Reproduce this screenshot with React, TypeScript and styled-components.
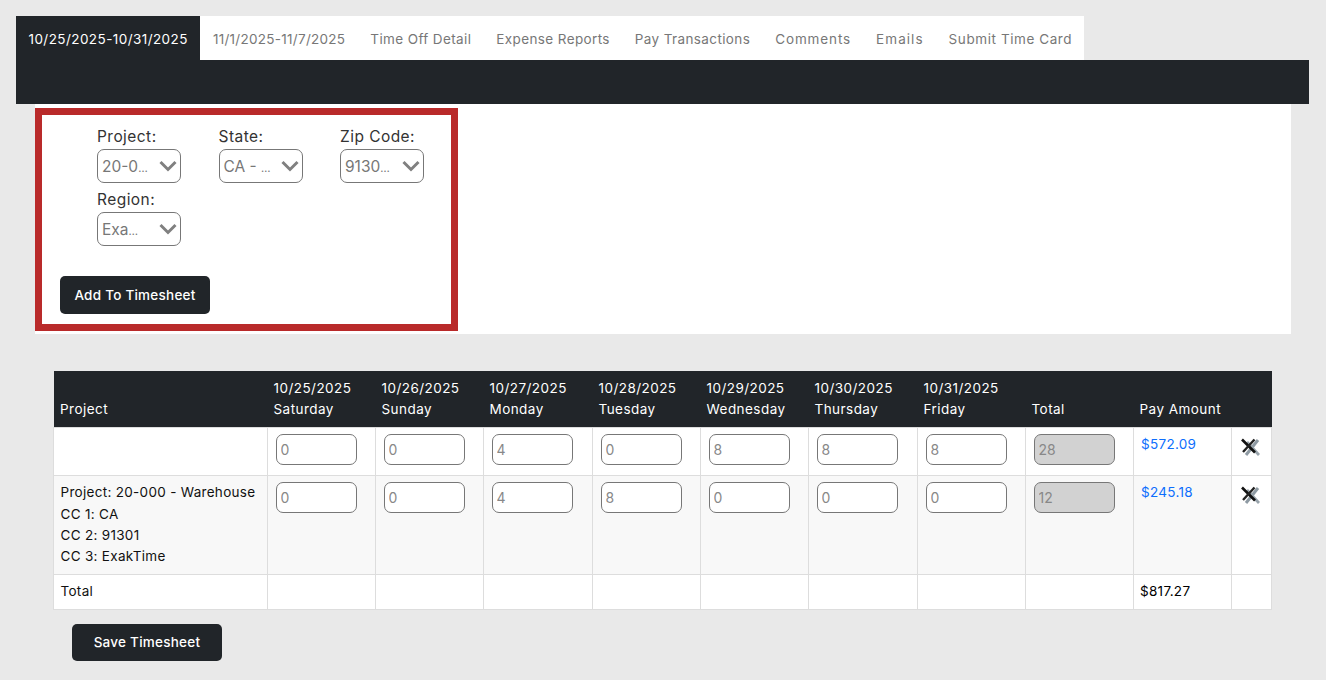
import React from "react";
import styled, { createGlobalStyle } from "styled-components";

const dark = "#212529";
const line = "#dddddd";

const GlobalStyle = createGlobalStyle`
  html, body {
    margin: 0;
    background: #e9e9e9;
    font-family: "Inter", "Liberation Sans", sans-serif;
    color: #212529;
  }
  * { box-sizing: border-box; }
`;

const tabs = [
  { label: "10/25/2025-10/31/2025", spacing: 0.43 },
  { label: "11/1/2025-11/7/2025", spacing: 0.28 },
  { label: "Time Off Detail", spacing: 0.38 },
  { label: "Expense Reports", spacing: 0.38 },
  { label: "Pay Transactions", spacing: 0.38 },
  { label: "Comments", spacing: 0.88 },
  { label: "Emails", spacing: 1.05 },
  { label: "Submit Time Card", spacing: 0.58 },
];

const days = [
  ["10/25/2025", "Saturday"],
  ["10/26/2025", "Sunday"],
  ["10/27/2025", "Monday"],
  ["10/28/2025", "Tuesday"],
  ["10/29/2025", "Wednesday"],
  ["10/30/2025", "Thursday"],
  ["10/31/2025", "Friday"],
];

const colWidths = [213.5, 108, 108, 109, 108, 108, 109, 108, 108, 98, 40.5];

const rows = [
  {
    hours: ["0", "0", "4", "0", "8", "8", "8"],
    total: "28",
    pay: "$572.09",
    info: [] as string[],
  },
  {
    hours: ["0", "0", "4", "8", "0", "0", "0"],
    total: "12",
    pay: "$245.18",
    info: ["Project: 20-000 - Warehouse", "CC 1: CA", "CC 2: 91301", "CC 3: ExakTime"],
  },
];

const filters = [
  { label: "Project:", value: "20-0" },
  { label: "State:", value: "CA - " },
  { label: "Zip Code:", value: "9130" },
  { label: "Region:", value: "Exa" },
];

const Chevron = () => (
  <ChevronIcon viewBox="0 0 18 14" width="18" height="14">
    <path d="M1.5 3 L9 10.5 L16.5 3" fill="none" stroke="#808080" strokeWidth="3" />
  </ChevronIcon>
);

const RemoveIcon = () => (
  <RemoveSvg viewBox="0 0 20 20" width="20" height="20">
    <path d="M18 3 L6 18" stroke="#8e9aa3" strokeWidth="3" fill="none" />
    <path d="M19 18 L7 5" stroke="#98a3ab" strokeWidth="2.8" fill="none" />
    <path d="M2 2.5 L15 15.5" stroke="#111" strokeWidth="2.6" fill="none" />
    <path d="M14.5 2.5 L3 15" stroke="#222" strokeWidth="2.4" fill="none" />
  </RemoveSvg>
);

const App = () => (
  <Page>
    <GlobalStyle />
    <TabList>
      {tabs.map((tab, i) => (
        <Tab key={tab.label} $active={i === 0} $spacing={tab.spacing}>
          {tab.label}
        </Tab>
      ))}
    </TabList>
    <DarkBar />
    <Panel>
      <FilterBox>
        <FilterGrid>
          {filters.map((f) => (
            <Field key={f.label}>
              <FieldLabel>{f.label}</FieldLabel>
              <Select>
                {f.value}
                <Dots>…</Dots>
                <Chevron />
              </Select>
            </Field>
          ))}
        </FilterGrid>
        <AddButton>Add To Timesheet</AddButton>
      </FilterBox>
    </Panel>
    <TableWrap>
      <Table>
        <colgroup>
          {colWidths.map((w, i) => (
            <col key={i} width={w} />
          ))}
        </colgroup>
        <thead>
          <tr>
            <HeadCell>Project</HeadCell>
            {days.map(([date, day]) => (
              <HeadCell key={date}>
                {date}
                <br />
                {day}
              </HeadCell>
            ))}
            <HeadCell>Total</HeadCell>
            <HeadCell>Pay Amount</HeadCell>
            <HeadCell />
          </tr>
        </thead>
        <tbody>
          {rows.map((row) => (
            <tr key={row.pay}>
              <InfoCell $shaded={row.info.length > 0}>
                {row.info.map((text) => (
                  <InfoLine key={text}>{text}</InfoLine>
                ))}
              </InfoCell>
              {row.hours.map((h, i) => (
                <Cell key={i} $shaded={row.info.length > 0}>
                  <HoursInput readOnly value={h} />
                </Cell>
              ))}
              <Cell $shaded={row.info.length > 0}>
                <HoursInput readOnly disabled value={row.total} />
              </Cell>
              <PayCell $shaded={row.info.length > 0}>
                <PayLink>{row.pay}</PayLink>
              </PayCell>
              <RemoveCell>
                <RemoveIcon />
              </RemoveCell>
            </tr>
          ))}
          <tr>
            <TotalCell>Total</TotalCell>
            {days.map(([date]) => (
              <TotalCell key={date} />
            ))}
            <TotalCell />
            <TotalCell $strong>$817.27</TotalCell>
            <TotalCell />
          </tr>
        </tbody>
      </Table>
    </TableWrap>
    <SaveButton>Save Timesheet</SaveButton>
  </Page>
);

const Page = styled.div`
  width: 1326px;
  height: 680px;
  overflow: hidden;
  padding: 16px 17px 0 16px;
`;

const TabList = styled.div`
  display: flex;
  width: 1068px;
  height: 44px;
  background: #fff;
`;

const Tab = styled.div<{ $active: boolean; $spacing: number }>`
  padding: 0 12.5px;
  line-height: 46px;
  font-size: 13.5px;
  letter-spacing: ${(p) => p.$spacing}px;
  white-space: nowrap;
  color: ${(p) => (p.$active ? "#fff" : "#777")};
  background: ${(p) => (p.$active ? dark : "transparent")};
`;

const DarkBar = styled.div`
  height: 44px;
  background: ${dark};
`;

const Panel = styled.div`
  width: 1256px;
  height: 230px;
  margin-left: 19px;
  padding-top: 4px;
  background: #fff;
`;

const FilterBox = styled.div`
  width: 423px;
  height: 223px;
  border: 7px solid #b92a2a;
  padding: 12px 0 0 18px;
`;

const FilterGrid = styled.div`
  display: grid;
  grid-template-columns: repeat(3, 121.5px);
  padding-left: 37px;
  row-gap: 7px;
`;

const Field = styled.div`
  display: flex;
  flex-direction: column;
`;

const FieldLabel = styled.label`
  font-size: 15.5px;
  line-height: 20px;
  margin-bottom: 2px;
  letter-spacing: 0.45px;
  color: #333;
`;

const Select = styled.div`
  position: relative;
  width: 84px;
  height: 34px;
  padding-left: 4px;
  border: 1px solid #777;
  border-radius: 7px;
  background: #fff;
  color: #777;
  font-size: 15.5px;
  line-height: 33px;
  white-space: pre;
`;

const Dots = styled.span`
  font-size: 11px;
  letter-spacing: -0.5px;
`;

const ChevronIcon = styled.svg`
  position: absolute;
  right: 3px;
  top: 9px;
`;

const DarkButton = styled.button`
  display: block;
  width: 150px;
  border: 0;
  border-radius: 5px;
  background: ${dark};
  color: #fff;
  font-family: inherit;
  font-size: 13.5px;
  font-weight: 500;
  letter-spacing: 0.25px;
`;

const AddButton = styled(DarkButton)`
  height: 38px;
  margin-top: 30px;
`;

const TableWrap = styled.div`
  margin: 37px 0 0 37px;
  width: 1218px;
`;

const Table = styled.table`
  width: 1218px;
  table-layout: fixed;
  border-collapse: collapse;
  font-size: 13.5px;
  letter-spacing: 0.3px;
`;

const HeadCell = styled.th`
  height: 56px;
  padding: 6px 6.5px 7px;
  background: ${dark};
  color: #fff;
  font-weight: 400;
  font-size: 13.5px;
  letter-spacing: 0.45px;
  line-height: 21px;
  text-align: left;
  vertical-align: bottom;
  white-space: nowrap;
`;

const Cell = styled.td<{ $shaded?: boolean }>`
  padding: 6px 8px;
  border: 1px solid ${line};
  vertical-align: top;
  background: ${(p) => (p.$shaded ? "#f8f8f8" : "#fff")};
`;

const InfoCell = styled(Cell)`
  padding: 6px 6.5px 6px;
  height: 48px;
`;

const InfoLine = styled.div`
  line-height: 21.2px;
  color: #111;
  white-space: nowrap;

  &:first-child {
    line-height: 20px;
    margin-bottom: 2.5px;
  }
`;

const HoursInput = styled.input`
  display: block;
  width: 81px;
  height: 31px;
  padding: 0 4px;
  border: 1px solid #777;
  border-radius: 7px;
  background: #fff;
  color: #888;
  font-family: inherit;
  font-size: 14px;

  &:disabled {
    background: #d2d2d2;
  }
`;

const PayCell = styled(Cell)`
  padding: 7px 7.5px;
`;

const PayLink = styled.a`
  color: #0d6efd;
  line-height: 18px;
`;

const RemoveCell = styled(Cell)`
  padding: 9px 8px 0;
`;

const RemoveSvg = styled.svg`
  display: block;
  filter: blur(0.4px);
`;

const TotalCell = styled.td<{ $strong?: boolean }>`
  height: 35px;
  padding: 0 6.5px 2px;
  border: 1px solid ${line};
  background: #fff;
  color: ${(p) => (p.$strong ? "#000" : "#111")};
`;

const SaveButton = styled(DarkButton)`
  height: 37px;
  margin: 14px 0 0 56px;
  padding-bottom: 1px;
`;

export default App;
